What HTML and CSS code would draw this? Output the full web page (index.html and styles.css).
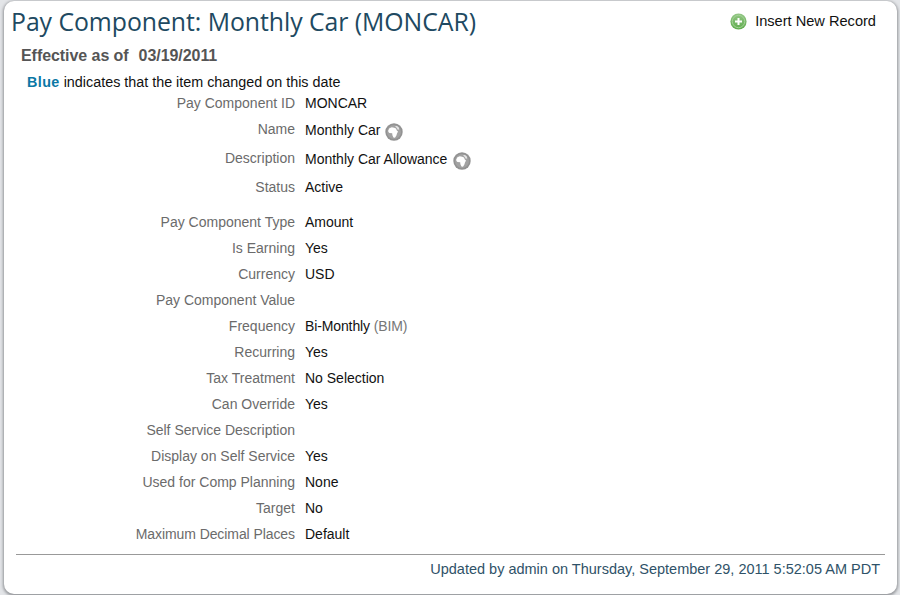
FILE: index.html
```html
<!DOCTYPE html>
<html lang="en">
<head>
<meta charset="utf-8">
<title>Pay Component</title>
<link rel="stylesheet" href="styles.css">
</head>
<body>
<svg width="0" height="0" class="defs" aria-hidden="true">
  <defs>
    <linearGradient id="green" x1="0" y1="0" x2="0" y2="1"><stop offset="0" stop-color="#93c685"/><stop offset="1" stop-color="#5fac4d"/></linearGradient>
    <symbol id="globe" viewBox="0 0 18 18">
      <circle cx="9" cy="9" r="8.7" fill="#929292"/>
      <circle cx="9" cy="9" r="7" fill="#a2a2a2"/>
      <path d="M3.2 7.4 4.4 5.2 6.8 4.3 9.2 4.8 11 5.6 11.8 7.6 13 8.4 12 10.4 11.4 12.4 10 14.8 8.4 14.6 7.4 12.2 7.2 10.2 4.4 10 3.4 9Z" fill="#fff"/>
      <path d="M10 3.2 12 3 13.8 4.4 14.2 6.4 12.8 6.8 11.8 5Z" fill="#e6e6e6"/>
    </symbol>
  </defs>
</svg>
<main class="card">
  <header class="head">
    <h1 class="title"><span>Pay Component: Monthly Car (MONCAR)</span></h1>
    <a class="insert">
      <svg class="plus" viewBox="0 0 17 17"><circle cx="8.5" cy="8.5" r="8.1" fill="url(#green)"/><circle cx="8.5" cy="8.5" r="6.2" fill="none" stroke="#a6d499" stroke-width=".9"/><path d="M8.5 5v7M5 8.5h7" stroke="#fff" stroke-width="2"/></svg>
      <span class="insert-text">Insert New Record</span>
    </a>
  </header>
  <h2 class="effective"><span class="effective-label">Effective as of</span><span class="effective-date">03/19/2011</span></h2>
  <p class="legend"><b>Blue</b> <span>indicates that the item changed on this date</span></p>
  <dl class="fields">
    <div class="row"><dt>Pay Component ID</dt><dd>MONCAR</dd></div>
    <div class="row tall"><dt>Name</dt><dd>Monthly Car<svg class="globe"><use href="#globe"/></svg></dd></div>
    <div class="row tall"><dt>Description</dt><dd>Monthly Car Allowance<svg class="globe wide"><use href="#globe"/></svg></dd></div>
    <div class="row last"><dt>Status</dt><dd>Active</dd></div>
    <div class="row"><dt>Pay Component Type</dt><dd>Amount</dd></div>
    <div class="row"><dt>Is Earning</dt><dd>Yes</dd></div>
    <div class="row"><dt>Currency</dt><dd>USD</dd></div>
    <div class="row"><dt>Pay Component Value</dt><dd></dd></div>
    <div class="row"><dt>Frequency</dt><dd class="freq">Bi-Monthly&nbsp;<span class="code">(BIM)</span></dd></div>
    <div class="row"><dt>Recurring</dt><dd>Yes</dd></div>
    <div class="row"><dt>Tax Treatment</dt><dd>No Selection</dd></div>
    <div class="row"><dt>Can Override</dt><dd>Yes</dd></div>
    <div class="row"><dt>Self Service Description</dt><dd></dd></div>
    <div class="row"><dt>Display on Self Service</dt><dd>Yes</dd></div>
    <div class="row"><dt>Used for Comp Planning</dt><dd>None</dd></div>
    <div class="row"><dt>Target</dt><dd>No</dd></div>
    <div class="row"><dt class="decimals">Maximum Decimal Places</dt><dd>Default</dd></div>
  </dl>
  <footer class="foot"><span>Updated by admin on Thursday, September 29, 2011 5:52:05 AM PDT</span></footer>
</main>
</body>
</html>
```
FILE: styles.css
```css
* { box-sizing: border-box; }
body {
  margin: 0;
  height: 595px;
  padding: 1px 3px 1px 4px;
  overflow: hidden;
  background: #e3e5e8;
  font: 14px/26px "Liberation Sans", Arial, sans-serif;
  color: #111;
}
.defs { position: absolute; }
.card {
  height: 593px;
  background: #fff;
  border-radius: 10px;
  box-shadow: 0 1px 3px 1px #94969a;
}
.head { display: flex; justify-content: space-between; height: 42px; }
.title {
  margin: 0;
  padding-left: 7px;
  font: 400 24.8px/40px "Open Sans", sans-serif;
  letter-spacing: -0.04px;
  color: #204961;
}
.insert { display: flex; align-items: center; height: 40px; padding-right: 21px; }
.plus { width: 17px; height: 17px; margin-right: 8px; }
.insert-text { font-size: 14.6px; }
.effective {
  display: flex;
  gap: 10px;
  margin: 0;
  padding-left: 17px;
  font-size: 16px;
  line-height: 26px;
  letter-spacing: -0.06px;
  color: #555;
}
.legend { margin: 0; padding-left: 23px; height: 21px; line-height: 27px; font-size: 14.35px; }
.legend b { color: #0b78a5; letter-spacing: 0.4px; }
.fields { margin: 0; }
.row { display: grid; grid-template-columns: 291px 1fr; column-gap: 10px; height: 26px; }
.row.tall { height: 29px; }
.row.last { height: 35px; }
dt { text-align: right; color: #6b6b6b; }
dd { display: flex; margin: 0; }
.tall dd { line-height: 28px; }
.globe { width: 18px; height: 18px; margin: 7px 0 0 5px; }
.globe.wide { margin-left: 6px; }
.freq { letter-spacing: -0.12px; }
.decimals { letter-spacing: -0.08px; }
.code { color: #777; }
.foot {
  margin: 7px 12px 0;
  border-top: 1px solid #999;
  padding-right: 5px;
  line-height: 28px;
  font-size: 14.5px;
  text-align: right;
  color: #2f5268;
}
```
